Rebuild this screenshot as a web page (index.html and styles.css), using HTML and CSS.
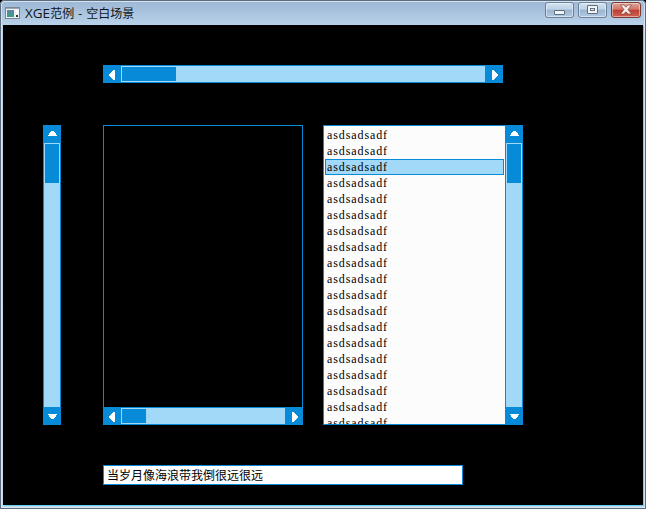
FILE: index.html
```html
<!DOCTYPE html>
<html lang="zh">
<head>
<meta charset="utf-8">
<title>XGE范例 - 空白场景</title>
<link rel="stylesheet" href="styles.css">
</head>
<body>
<svg class="defs" width="0" height="0" aria-hidden="true">
  <symbol id="arrow-up" viewBox="0 0 10 6"><path d="M4 0h3v1h1v1h1v2h1v1H1V4h1V2h1V1h1z"/></symbol>
  <symbol id="arrow-down" viewBox="0 0 10 6"><path d="M1 1h9v1H9v2H8v1H7v1H4V5H3V4H2V2H1z"/></symbol>
  <symbol id="arrow-left" viewBox="0 0 6 12"><path d="M0 6h1V5h1V4h1V3h1V2h2v10H4v-1H3v-1H2V9H1V8H0z"/></symbol>
  <symbol id="arrow-right" viewBox="0 0 8 12"><path d="M2 2h2v1h1v1h1v1h1v1h1v2H7v1H6v1H5v1H4v1H2z"/></symbol>
</svg>
<div class="window">
  <header class="titlebar">
    <svg class="app-icon" width="15" height="12" viewBox="0 0 15 12">
      <rect x="0.5" y="0.5" width="14" height="11" fill="#eef2f6" stroke="#7b8794"/>
      <rect x="1" y="1" width="13" height="1" fill="#9aa6b2"/>
      <rect x="2" y="3" width="7" height="7" fill="#3f9a8c"/>
      <rect x="2" y="3" width="7" height="3" fill="#5b86a8"/>
      <rect x="11" y="3" width="2" height="4" fill="#ffffff"/>
      <rect x="11" y="8" width="2" height="2" fill="#2c343c"/>
    </svg>
    <span class="title"><span class="title-latin">XGE</span>范例 - 空白场景</span>
    <div class="caption-buttons">
      <div class="cap-btn"><span class="glyph-min"></span></div>
      <div class="cap-btn"><span class="glyph-max"></span></div>
      <div class="cap-btn close"><svg width="16" height="11" viewBox="0 0 16 11"><path d="M2.500 1h3.200L8 3.200 10.300 1h3.200L10 5.500l3.500 4.500h-3.200L8 7.800 5.700 10H2.500L6 5.500z" fill="#f4f0ee" stroke="#7a3028" stroke-width="0.6"/></svg></div>
    </div>
  </header>
  <main class="canvas">
    <div class="hscroll wide">
      <div class="sb-btn"><svg class="arrow-l"><use href="#arrow-left"/></svg></div>
      <div class="h-track"><div class="h-thumb thumb-wide"></div></div>
      <div class="sb-btn"><svg class="arrow-r"><use href="#arrow-right"/></svg></div>
    </div>
    <div class="middle">
      <div class="vscroll">
        <div class="sb-btn"><svg class="arrow-v"><use href="#arrow-up"/></svg></div>
        <div class="v-track"><div class="v-thumb"></div></div>
        <div class="sb-btn"><svg class="arrow-v"><use href="#arrow-down"/></svg></div>
      </div>
      <div class="blackbox">
        <div class="blackbox-view"></div>
        <div class="hscroll">
          <div class="sb-btn"><svg class="arrow-l"><use href="#arrow-left"/></svg></div>
          <div class="h-track"><div class="h-thumb thumb-small"></div></div>
          <div class="sb-btn"><svg class="arrow-r"><use href="#arrow-right"/></svg></div>
        </div>
      </div>
      <div class="listbox">
        <ul class="items">
          <li>asdsadsadf</li><li>asdsadsadf</li><li class="selected">asdsadsadf</li><li>asdsadsadf</li>
          <li>asdsadsadf</li><li>asdsadsadf</li><li>asdsadsadf</li><li>asdsadsadf</li>
          <li>asdsadsadf</li><li>asdsadsadf</li><li>asdsadsadf</li><li>asdsadsadf</li>
          <li>asdsadsadf</li><li>asdsadsadf</li><li>asdsadsadf</li><li>asdsadsadf</li>
          <li>asdsadsadf</li><li>asdsadsadf</li><li>asdsadsadf</li>
        </ul>
        <div class="vscroll">
          <div class="sb-btn"><svg class="arrow-v"><use href="#arrow-up"/></svg></div>
          <div class="v-track"><div class="v-thumb"></div></div>
          <div class="sb-btn"><svg class="arrow-v"><use href="#arrow-down"/></svg></div>
        </div>
      </div>
    </div>
    <div class="edit">当岁月像海浪带我倒很远很远</div>
  </main>
</div>
</body>
</html>
```

FILE: styles.css
```css
* { box-sizing: border-box; }
html, body { margin: 0; padding: 0; background: #000; }
.defs { position: absolute; }

.window {
  width: 646px;
  height: 509px;
  display: flex;
  flex-direction: column;
  padding: 0 3px 4px;
  background: linear-gradient(180deg, #9bb6d4 0, #b9d1ea 25px, #c4daf0 100%);
  border-radius: 5px 5px 0 0;
  box-shadow: inset 0 0 0 1px #5e6b78, inset 0 0 0 2px #d4e4f4;
}

.titlebar {
  height: 25px;
  flex: none;
  display: flex;
  align-items: center;
  padding-left: 2px;
}
.app-icon { flex: none; margin-top: 1px; }
.title {
  margin-left: 5px;
  font: 12px "Open Sans", "Noto Sans CJK SC", sans-serif;
  color: #0e1620;
  white-space: nowrap;
  word-spacing: 1px;
}
.title-latin { font-size: 13.500px; }
.caption-buttons {
  margin-left: auto;
  margin-top: -6px;
  margin-right: 2px;
  display: flex;
  gap: 4px;
}
.cap-btn {
  width: 29px;
  height: 16px;
  border: 1px solid #6a819c;
  border-radius: 3px;
  background: linear-gradient(180deg, #d3e2f0 0, #bdd2e6 45%, #9ab4d0 50%, #b2cbe3 100%);
  box-shadow: inset 0 0 0 1px rgba(255,255,255,.45);
  display: flex;
  align-items: center;
  justify-content: center;
}
.cap-btn.close {
  width: 30px;
  border-color: #7a3a32;
  background: linear-gradient(180deg, #e0a498 0, #d2766a 45%, #bb3f32 50%, #cf6254 100%);
}
.glyph-min {
  width: 11px; height: 5px; margin-top: 5px;
  background: #f2f5f8; border: 1px solid #5f6c7c; border-radius: 1px;
}
.glyph-max {
  width: 11px; height: 9px;
  border: 1px solid #5f6c7c; border-radius: 1px;
  background: #f2f5f8;
  box-shadow: inset 0 0 0 2px #f2f5f8, inset 0 0 0 3px #5f6c7c;
}

.canvas {
  flex: 1;
  background: #000;
  display: flex;
  flex-direction: column;
  align-items: flex-start;
  padding: 40px 0 0 40px;
  box-shadow: 1px 1px 0 #62d2ec;
}

.hscroll {
  height: 18px;
  display: flex;
  flex: none;
  background: #078bd8;
}
.hscroll.wide { width: 400px; margin-left: 60px; }
.vscroll {
  width: 18px;
  height: 300px;
  display: flex;
  flex: none;
  flex-direction: column;
  background: #078bd8;
}
.sb-btn {
  width: 18px;
  height: 18px;
  flex: none;
  display: flex;
  align-items: center;
  justify-content: center;
  fill: #fff;
}
.arrow-l { width: 6px; height: 12px; display: block; shape-rendering: crispEdges; }
.arrow-r { width: 8px; height: 12px; display: block; shape-rendering: crispEdges; }
.arrow-v { width: 10px; height: 6px; display: block; shape-rendering: crispEdges; }

.h-track {
  flex: 1;
  display: flex;
  margin: 1px 0;
  background: #a2d8f8;
}
.h-thumb {
  background: #078bd8;
  border: 1px solid #a2d8f8;
  border-right: 0;
}
.thumb-wide { width: 55px; }
.thumb-small { width: 25px; }

.v-track {
  flex: 1;
  margin: 0 1px;
  background: #a2d8f8;
}
.v-thumb {
  height: 40px;
  background: #078bd8;
  border: 1px solid #a2d8f8;
  border-bottom: 0;
}

.middle {
  margin-top: 42px;
  display: flex;
  align-items: flex-start;
}
.blackbox {
  width: 200px;
  height: 300px;
  margin-left: 42px;
  display: flex;
  flex-direction: column;
}
.blackbox-view {
  flex: 1;
  background: #000;
  border: 1px solid #078bd8;
  border-bottom: 0;
}
.blackbox .hscroll { width: 200px; }

.listbox {
  width: 200px;
  height: 300px;
  margin-left: 20px;
  display: flex;
  background: #fcfcfc;
  border: 1px solid #078bd8;
  border-right: 0;
  overflow: hidden;
}
.listbox .vscroll { margin: -1px 0; }
.items {
  flex: 1;
  list-style: none;
  margin: 0;
  padding: 1px 1px 0;
  overflow: hidden;
  min-width: 0;
}
.items li {
  height: 16px;
  padding-left: 2px;
  font: 12px/16px "Liberation Serif", serif;
  letter-spacing: 0.900px;
  color: #000;
}
.items li.selected {
  background: #a2d8f8;
  outline: 1px solid #078bd8;
  outline-offset: -1px;
}

.edit {
  margin: 40px 0 0 60px;
  width: 360px;
  height: 20px;
  padding-left: 3px;
  background: #fff;
  border: 1px solid #078bd8;
  color: #000;
  font: 12px/18px "Noto Sans CJK SC", sans-serif;
}
```
